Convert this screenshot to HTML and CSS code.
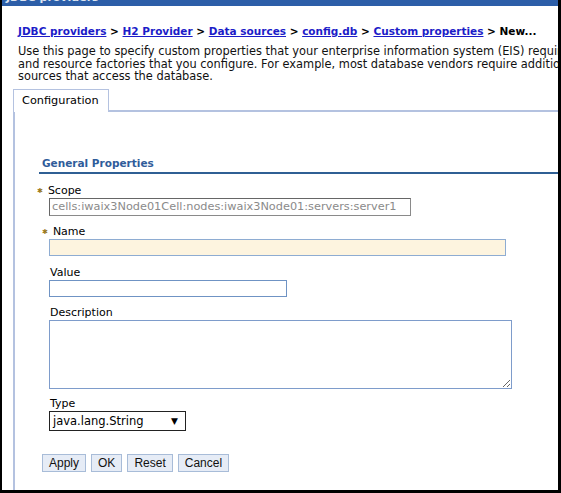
FILE: index.html
```html
<!DOCTYPE html>
<html lang="en">
<head>
    <meta charset="UTF-8">
    <title>New custom property</title>
    <link rel="stylesheet" href="styles.css">
</head>
<body>

    <div class="frame">
        <div class="titlebar"><span>JDBC providers</span></div>

        <div class="crumbs">
            <a href="#">JDBC providers</a> &gt; <a href="#">H2 Provider</a> &gt; <a href="#">Data sources</a> &gt; <a href="#">config.db</a> &gt; <a href="#">Custom properties</a> &gt; New...
        </div>

        <div class="intro">
            <div>Use this page to specify custom properties that your enterprise information system (EIS) requires</div>
            <div>and resource factories that you configure. For example, most database vendors require additional</div>
            <div>sources that access the database.</div>
        </div>

        <div class="tabs">
            <div class="tab">Configuration</div>
            <div class="tab-rest"></div>
        </div>

        <div class="panel">
            <h3 class="section">General Properties</h3>

            <div class="field first">
                <label class="req"><span class="star">&#10033;</span>Scope</label>
                <input class="scope" type="text" value="cells:iwaix3Node01Cell:nodes:iwaix3Node01:servers:server1" readonly>
            </div>

            <div class="field name-field">
                <label class="req name-label"><span class="star">&#10033;</span>Name</label>
                <input class="name" type="text">
            </div>

            <div class="field value-field">
                <label>Value</label>
                <input class="value" type="text">
            </div>

            <div class="field">
                <label>Description</label>
                <textarea class="desc"></textarea>
            </div>

            <div class="field type-field">
                <label>Type</label>
                <div class="select">
                    <span>java.lang.String</span>
                    <span class="arrow">&#9660;</span>
                </div>
            </div>

            <div class="buttons">
                <button type="button">Apply</button>
                <button type="button">OK</button>
                <button type="button">Reset</button>
                <button type="button">Cancel</button>
            </div>
        </div>
    </div>

</body>
</html>
```

FILE: styles.css
```css
body {
    margin: 0;
    padding: 0;
    background-color: #fff;
    font-family: "DejaVu Sans", Verdana, sans-serif;
    font-size: 11px;
    color: #000;
}

.frame {
    width: 561px;
    height: 493px;
    box-sizing: border-box;
    border-left: 2px solid #000;
    border-right: 3px solid #000;
    border-bottom: 3px solid #000;
    overflow: hidden;
    display: flex;
    flex-direction: column;
}

.titlebar {
    height: 6px;
    background-color: #2c5ea8;
    overflow: hidden;
    color: #dfe6f2;
    font-weight: bold;
    font-size: 11px;
    padding-left: 4px;
}

.titlebar span {
    display: block;
    margin-top: -9px;
}

.crumbs {
    margin-top: 19px;
    padding-left: 16px;
    font-weight: bold;
    font-size: 10.5px;
    white-space: nowrap;
    line-height: 12px;
}

.crumbs a {
    color: #1c1cc8;
}

.intro {
    margin-top: 8px;
    padding-left: 16px;
    font-size: 11.4px;
    line-height: 12.5px;
    white-space: nowrap;
    color: #111;
}

.tabs {
    display: flex;
    margin-top: 6px;
    margin-left: 11px;
}

.tab {
    width: 86px;
    height: 22px;
    line-height: 22px;
    padding-left: 8px;
    border: 1px solid #b4c2e0;
    border-bottom: none;
    font-size: 11.3px;
}

.tab-rest {
    flex: 1;
    border-bottom: 2px solid #b4c2e0;
}

.panel {
    flex: 1;
    margin-left: 11px;
    border-left: 2px solid #b4c2e0;
    padding-left: 22px;
}

.section {
    margin: 45px 0 0 2px;
    padding: 0 0 2px 3px;
    border-bottom: 2px solid #2f5f94;
    color: #2f5c9a;
    font-size: 10.5px;
    line-height: 13px;
}

.field {
    display: flex;
    flex-direction: column;
    align-items: flex-start;
    margin-top: 10px;
    padding-left: 12px;
}

.field.first {
    margin-top: 11px;
}

.field.value-field {
    margin-top: 11px;
}

.field.type-field {
    margin-top: 9px;
}

.field label {
    line-height: 12px;
    margin-bottom: 1px;
    padding-left: 1px;
}

.req {
    margin-left: -13px;
}

.name-label {
    margin-left: -8px;
}

.star {
    color: #9a7a1e;
    font-size: 7px;
    margin-right: 5px;
    vertical-align: 1px;
}

input, textarea {
    box-sizing: border-box;
    margin: 0;
    font-family: "DejaVu Sans", Verdana, sans-serif;
    font-size: 11px;
}

.scope {
    width: 362px;
    height: 18px;
    border: 1px solid #8a8a8a;
    border-top-color: #666;
    border-left-color: #666;
    color: #8a8a8a;
    padding: 0 2px;
    font-size: 11.3px;
    background-color: #fff;
}

.name {
    width: 457px;
    height: 17px;
    border: 1px solid #8eacd2;
    background-color: #fdf4df;
}

.value {
    width: 238px;
    height: 17px;
    border: 1px solid #6f93c4;
    background-color: #fff;
}

.desc {
    width: 463px;
    height: 69px;
    border: 1px solid #7e9ccb;
    background-color: #fff;
}

.select {
    width: 137px;
    height: 20px;
    box-sizing: border-box;
    border: 1px solid #222;
    display: flex;
    align-items: center;
    justify-content: space-between;
    padding: 0 7px 0 3px;
    font-size: 11.5px;
}

.arrow {
    font-size: 9px;
}

.buttons {
    display: flex;
    gap: 5px;
    margin-top: 23px;
    padding-left: 5px;
}

button {
    font-family: "Liberation Sans", Arial, sans-serif;
    font-size: 12px;
    height: 18px;
    padding: 0 6px;
    background-color: #e6ecf6;
    border: 1px solid #a8bcd8;
    color: #111;
}
```
